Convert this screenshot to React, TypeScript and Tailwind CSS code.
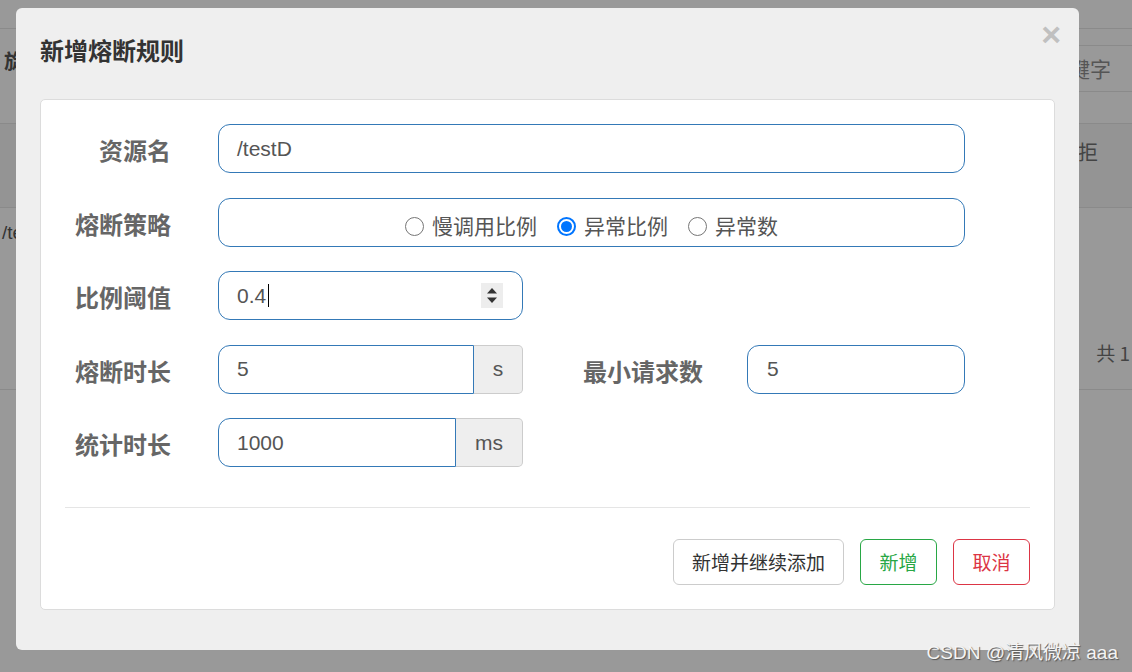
import React from 'react'

function Radio({ checked, label }: { checked?: boolean; label: string }) {
  return (
    <label className="flex items-center">
      {checked ? (
        <span className="w-[19px] h-[19px] rounded-full border-2 border-[#0075ff] bg-white flex items-center justify-center">
          <span className="w-[11px] h-[11px] rounded-full bg-[#0075ff]" />
        </span>
      ) : (
        <span className="w-[19px] h-[19px] rounded-full border-[1.5px] border-[#767676] bg-white" />
      )}
      <span className="ml-[8px]">{label}</span>
    </label>
  )
}

function Label({ children, className = '' }: { children: React.ReactNode; className?: string }) {
  return (
    <div className={`text-right text-[24px] leading-[32px] font-bold text-[#666] pt-[12px] ${className}`}>
      {children}
    </div>
  )
}

export default function App() {
  return (
    <div className="relative w-[1132px] h-[672px] overflow-hidden bg-[#999] font-['Liberation_Sans','Noto_Sans_CJK_SC',sans-serif]">
      {/* page behind the overlay */}
      <div className="flex flex-col">
        <div className="h-[29px] border-b border-[#8a8a8a]" />
        <div className="h-[95px] border-b border-[#8a8a8a] flex items-start">
          <span className="pl-[4px] pt-[17px] text-[20px] font-bold text-[#333] font-['Noto_Sans_CJK_SC',sans-serif]">旋转</span>
          <div className="ml-auto mr-[-40px] mt-[16px] w-[136px] h-[47px] border-y border-[#8a8a8a] pl-[12px] flex items-center text-[21px] text-[#555] font-['Noto_Sans_CJK_SC',sans-serif]">
            关键字
          </div>
        </div>
        <div className="h-[84px] border-b border-[#8a8a8a] bg-[#949494] flex justify-end pr-[34px] pt-[13px] text-[20px] text-[#444] font-['Noto_Sans_CJK_SC',sans-serif]">
          拒
        </div>
        <div className="h-[182px] border-b border-[#8a8a8a] flex justify-between text-[19px] text-[#333]">
          <span className="pl-[2px] pt-[11px]">/test</span>
          <span className="self-end pb-[22px] pr-[2px] text-[#444] font-['Noto_Sans_CJK_SC',sans-serif]">共 1</span>
        </div>
      </div>

      {/* modal */}
      <div className="absolute left-[16px] top-[8px] w-[1063px] h-[642px] bg-[#efefef] rounded-[6px] px-[24px] pt-[26px]">
        <button
          type="button"
          className="absolute right-[18px] top-[9px] text-[34px] leading-[34px] font-bold text-[#c0c0c0]"
        >
          ×
        </button>
        <h4 className="text-[24px] leading-[32px] font-bold text-[#333] font-['Noto_Sans_CJK_SC',sans-serif]">
          新增熔断规则
        </h4>

        <div className="mt-[33px] h-[511px] bg-white border border-[#dcdcdc] rounded-[5px] pt-[24px] px-[24px]">
          <div className="flex flex-col gap-[24.5px] text-[21px] text-[#555] font-['Liberation_Sans','Noto_Sans_CJK_SC',sans-serif]">
            {/* 资源名 */}
            <div className="flex h-[49px]">
              <Label className="w-[106px]">资源名</Label>
              <div className="ml-[47px] w-[747px] h-[49px] border border-[#3479b7] rounded-[12px] pl-[18px] flex items-center">
                /testD
              </div>
            </div>

            {/* 熔断策略 */}
            <div className="flex h-[49px]">
              <Label className="w-[106px]">熔断策略</Label>
              <div className="ml-[47px] w-[747px] h-[49px] border border-[#3479b7] rounded-[12px] flex items-center justify-center gap-[20px] pt-[8px] font-['Noto_Sans_CJK_SC',sans-serif]">
                <Radio label="慢调用比例" />
                <Radio checked label="异常比例" />
                <Radio label="异常数" />
              </div>
            </div>

            {/* 比例阈值 */}
            <div className="flex h-[49px]">
              <Label className="w-[106px]">比例阈值</Label>
              <div className="ml-[47px] w-[305px] h-[49px] border border-[#3479b7] rounded-[12px] pl-[18px] pr-[19px] flex items-center">
                <span>0.4</span>
                <span className="ml-[2px] w-px h-[23px] bg-black" />
                <svg className="ml-auto" width="22" height="25" viewBox="0 0 22 25">
                  <rect x="0" y="0" width="22" height="25" fill="#ededed" />
                  <path d="M6 10.5 L11 5 L16 10.5 Z" fill="#333" />
                  <path d="M6 14.5 L11 20 L16 14.5 Z" fill="#333" />
                </svg>
              </div>
            </div>

            {/* 熔断时长 / 最小请求数 */}
            <div className="flex h-[49px]">
              <Label className="w-[106px]">熔断时长</Label>
              <div className="ml-[47px] flex h-[49px]">
                <div className="w-[256px] border border-[#3479b7] rounded-l-[12px] pl-[18px] flex items-center">5</div>
                <div className="w-[49px] border border-l-0 border-[#cccccc] bg-[#eeeeee] rounded-r-[5px] flex items-center justify-center">
                  s
                </div>
              </div>
              <Label className="w-[180px]">最小请求数</Label>
              <div className="ml-[44px] w-[218px] h-[49px] border border-[#3479b7] rounded-[12px] pl-[19px] flex items-center">
                5
              </div>
            </div>

            {/* 统计时长 */}
            <div className="flex h-[49px]">
              <Label className="w-[106px]">统计时长</Label>
              <div className="ml-[47px] flex h-[49px]">
                <div className="w-[238px] border border-[#3479b7] rounded-l-[12px] pl-[18px] flex items-center">1000</div>
                <div className="w-[67px] border border-l-0 border-[#cccccc] bg-[#eeeeee] rounded-r-[5px] flex items-center justify-center">
                  ms
                </div>
              </div>
            </div>
          </div>

          <div className="mt-[40px] h-px bg-[#e5e5e5]" />

          <div className="mt-[31px] flex justify-end gap-[16px] text-[19px] font-['Noto_Sans_CJK_SC',sans-serif]">
            <button type="button" className="h-[46px] w-[171px] border border-[#cccccc] rounded-[6px] text-[#333] bg-white">
              新增并继续添加
            </button>
            <button type="button" className="h-[46px] w-[77px] border border-[#28a745] rounded-[6px] text-[#28a745] bg-white">
              新增
            </button>
            <button type="button" className="h-[46px] w-[77px] border border-[#dc3545] rounded-[6px] text-[#dc3545] bg-white">
              取消
            </button>
          </div>
        </div>
      </div>

      {/* watermark */}
      <div className="absolute right-[14px] bottom-[7px] text-[19px] leading-[24px] text-[#f4f4f4] [text-shadow:1px_1px_1px_#555] font-['Liberation_Sans','Noto_Sans_CJK_SC',sans-serif]">
        CSDN @清风微凉 aaa
      </div>
    </div>
  )
}
